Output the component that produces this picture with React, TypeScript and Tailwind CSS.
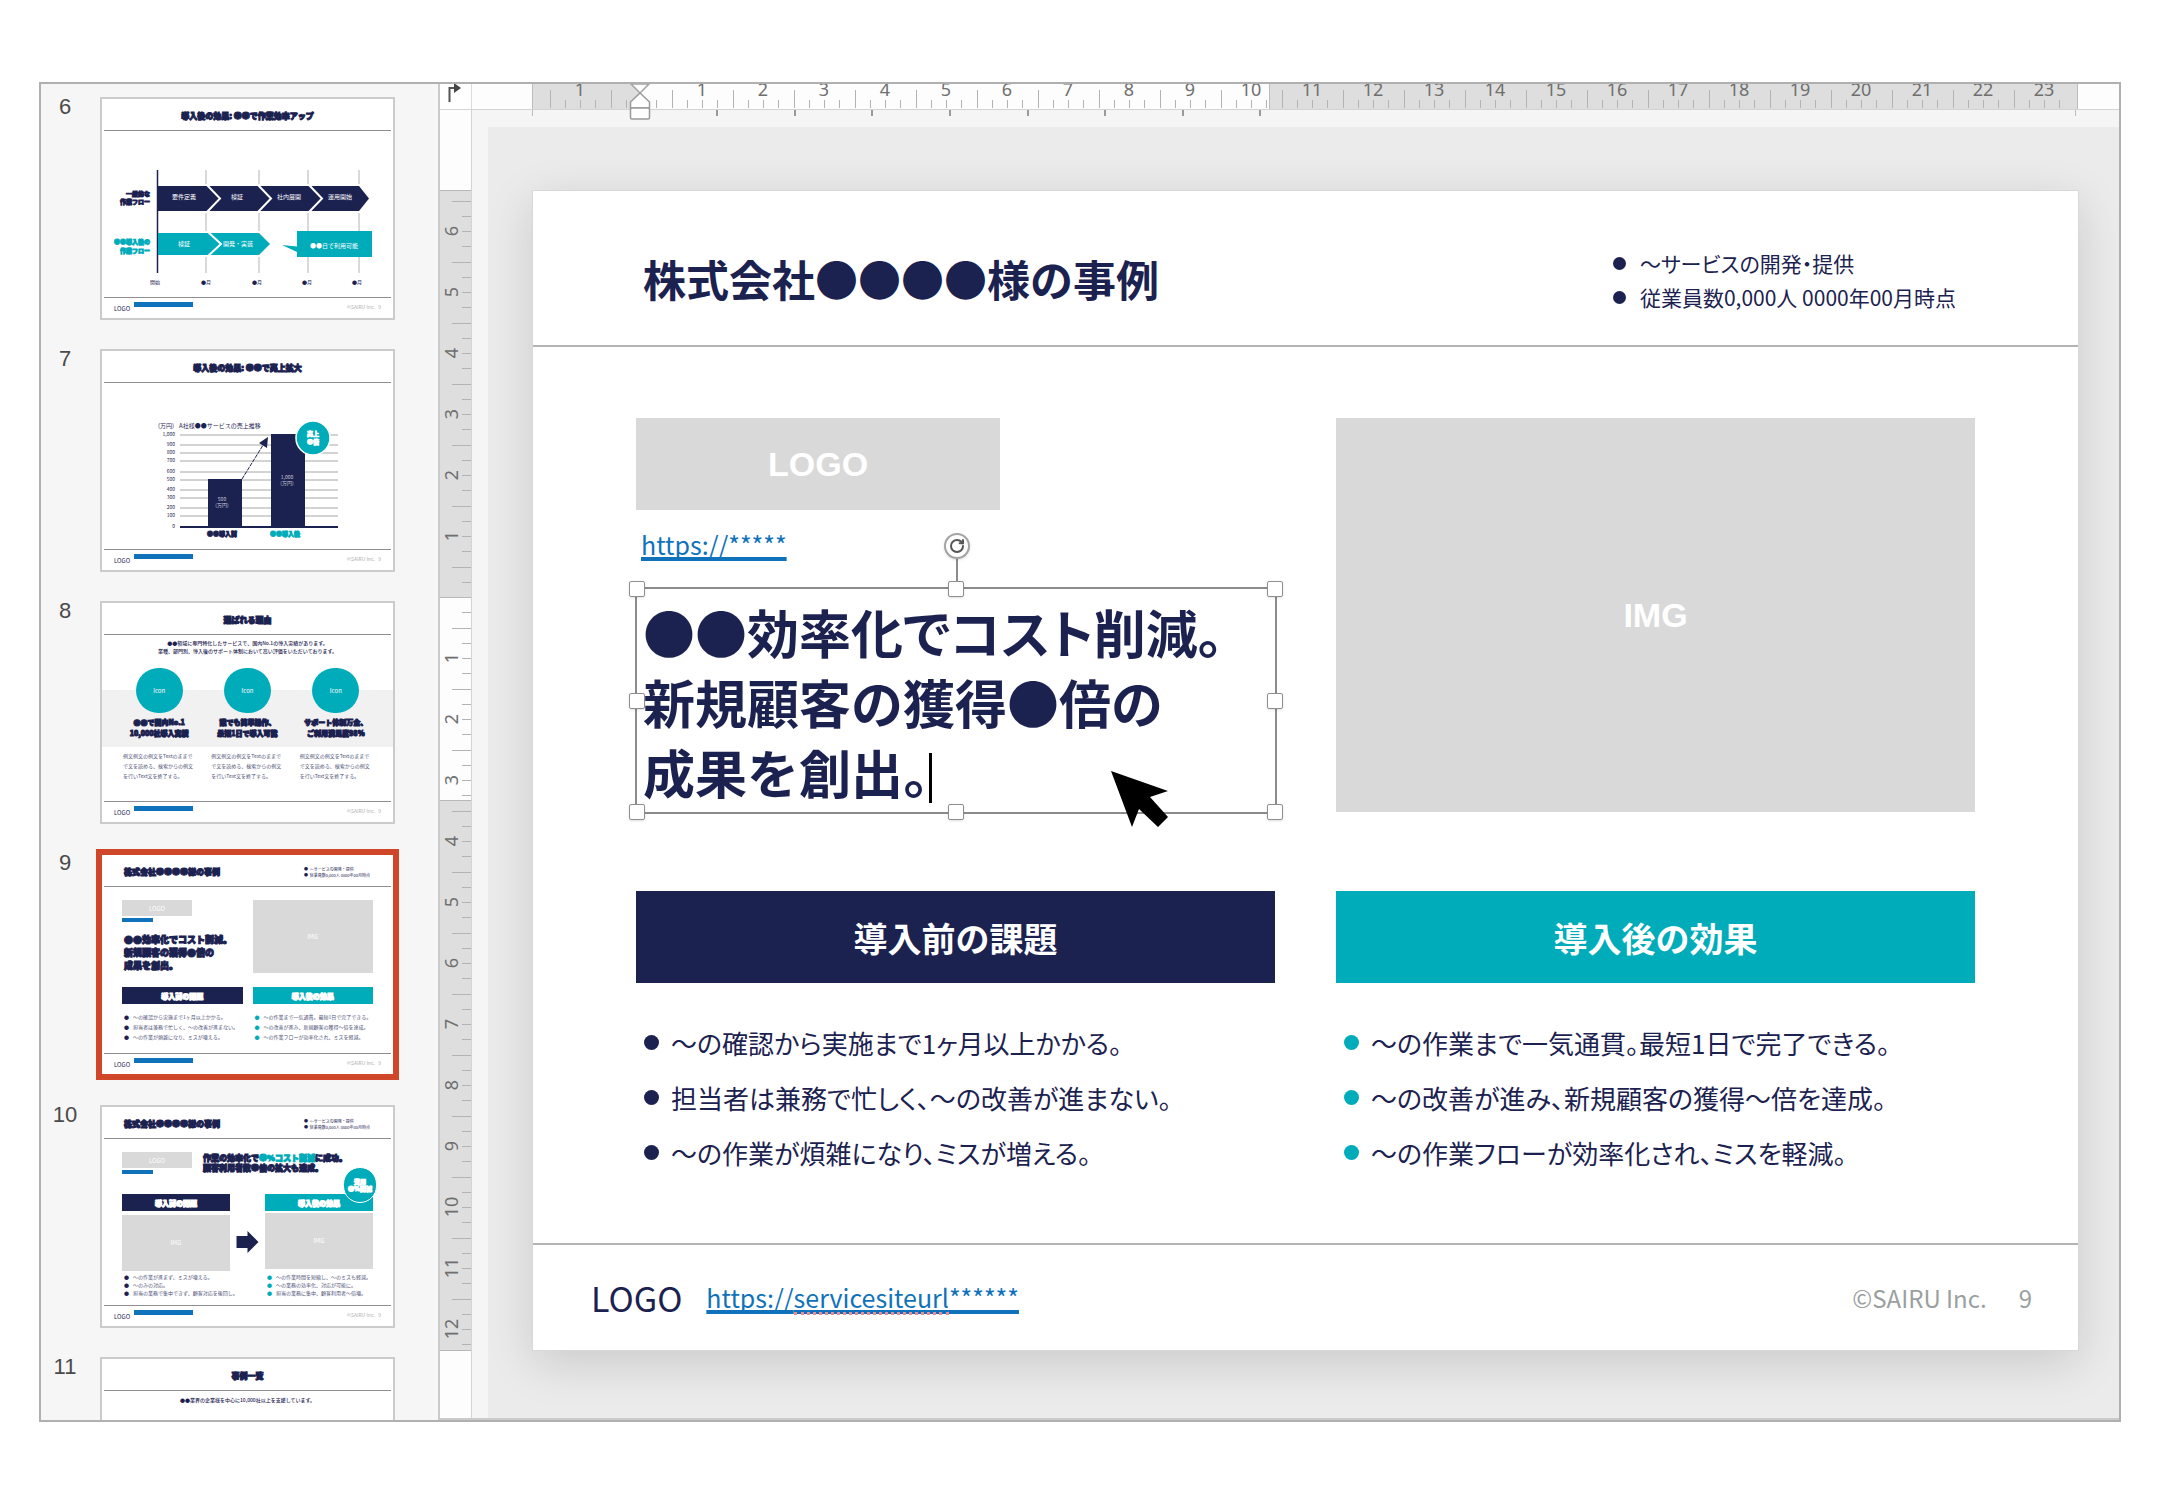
import type { ReactNode } from "react";
import { RotateCw } from "lucide-react";

const CM = 61;

/* ---------- slide thumbnails ---------- */

function ThumbFrame({ header, children }: { header: ReactNode; children?: ReactNode }) {
  return (
    <>
      <span className="mx-px flex h-[31px] items-center pt-0.5">{header}</span>
      <span className="mx-0.5 block h-px bg-[#8f8f8f]" />
      <span className="block h-[166px]">{children}</span>
      <span className="mx-0.5 block h-px bg-[#8f8f8f]" />
      <span className="flex h-5 items-start pt-1 pr-3 pl-3 text-[6px] leading-[10px]">
        <span className="w-5 pt-0.5">LOGO</span>
        <span className="h-[5px] w-[59px] bg-[#0f72ba]" />
        <span className="ml-auto text-[5px] text-[#b0b0b0]">©SAIRU Inc.&nbsp;&nbsp; 9</span>
      </span>
    </>
  );
}

function CenterTitle({ children }: { children: ReactNode }) {
  return (
    <span className="w-full text-center text-[8px] leading-[10px] font-black [-webkit-text-stroke:1px]">{children}</span>
  );
}

function CaseTitle() {
  return (
    <span className="flex w-full items-center justify-between pr-[22px] pl-[21px]">
      <span className="text-[8px] leading-[10px] font-black [-webkit-text-stroke:1px]">株式会社●●●●様の事例</span>
      <span className="text-[4px] leading-[6px]">
        <span className="block">●&nbsp; 〜サービスの開発・提供</span>
        <span className="block">●&nbsp; 従業員数0,000人 0000年00月時点</span>
      </span>
    </span>
  );
}

function FlowThumb() {
  return (
    <ThumbFrame header={<CenterTitle>導入後の効果: ●●で作業効率アップ</CenterTitle>}>
      <svg viewBox="2 34 291 166" className="block h-full w-full">
        <path d="M106 73V176M159 73V176M208 73V176M259 73V176" stroke="#b3b3b3" fill="none" />
        <path d="M58 87H260L272 102L260 116H58ZM58 134H160L173 147L160 160H58Z" fill="#fff" />
        <path d="M57.500 73V176" stroke="#1c2250" strokeWidth="1.500" />
        <path d="M58 89H259L269 101.500L259 114H58Z" fill="#1c2250" />
        <path d="M58 136H159L170 147L159 158H58Z" fill="#00acba" />
        <path d="M107 88L120 101.500L107 115M158 88L171 101.500L158 115M209 88L222 101.500L209 115M108 135L121 147L108 159" fill="none" stroke="#fff" strokeWidth="2" />
        <path d="M197 134H272V160H197V155L182 148L197 149.500Z" fill="#00acba" />
        <g fill="#fff" fontSize="6" textAnchor="middle">
          <text x="84" y="102">要件定義</text>
          <text x="137" y="102">検証</text>
          <text x="189" y="102">社内展開</text>
          <text x="240" y="102">運用開始</text>
          <text x="84" y="149">検証</text>
          <text x="138" y="149">開発・実装</text>
          <text x="234" y="151">●●日で利用可能</text>
        </g>
        <g fontSize="6" fontWeight="900" textAnchor="end" strokeWidth="0.800">
          <g fill="#1c2250" stroke="#1c2250">
            <text x="50" y="99">一般的な</text>
            <text x="50" y="107">作業フロー</text>
          </g>
          <g fill="#00acba" stroke="#00acba">
            <text x="50" y="147">●●導入後の</text>
            <text x="50" y="156">作業フロー</text>
          </g>
        </g>
        <g fill="#1c2250" fontSize="5" textAnchor="middle">
          <text x="55" y="187">開始</text>
          <text x="106" y="187">●月</text>
          <text x="157" y="187">●月</text>
          <text x="207" y="187">●月</text>
          <text x="257" y="187">●月</text>
        </g>
      </svg>
    </ThumbFrame>
  );
}

const gridYs = [86, 96, 104, 112, 123, 131, 141, 149, 159, 167, 178];

function ChartThumb() {
  return (
    <ThumbFrame header={<CenterTitle>導入後の効果: ●●で売上拡大</CenterTitle>}>
      <svg viewBox="2 34 291 166" className="block h-full w-full">
        {gridYs.map((y, i) => (
          <g key={y}>
            <path d={`M80 ${y}H238`} stroke="#a6a6a6" />
            <text x="75" y={y + 1} fontSize="5" textAnchor="end" fill="#1c2250">
              {i === 0 ? "1,000" : 1000 - i * 100}
            </text>
          </g>
        ))}
        <path d="M108 130H142V178H108ZM171 85H205V178H171Z" fill="#1c2250" />
        <path d="M80 178H238" stroke="#1c2250" strokeWidth="2" />
        <path d="M142 130L165 93" stroke="#1c2250" strokeDasharray="4 1" />
        <path d="M168 88L159 94L167 99Z" fill="#1c2250" />
        <circle cx="213" cy="89" r="17" fill="#00acba" stroke="#fff" strokeWidth="1.500" />
        <g fill="#1c2250" fontSize="5">
          <text x="58" y="79" fontSize="6">(万円)</text>
          <text x="79" y="79" fontSize="6">A社様●●サービスの売上推移</text>
        </g>
        <g fill="#c9cad8" textAnchor="middle" fontSize="5">
          <text x="122" y="152">500</text>
          <text x="122" y="158">(万円)</text>
          <text x="187" y="130">1,000</text>
          <text x="187" y="136">(万円)</text>
          <g fill="#fff" fontSize="6" fontWeight="900" stroke="#fff" strokeWidth="0.700">
            <text x="213" y="87">売上</text>
            <text x="213" y="95">●倍</text>
          </g>
        </g>
        <g fontSize="6" fontWeight="900" textAnchor="middle" strokeWidth="0.800">
          <text x="122" y="187" fill="#1c2250" stroke="#1c2250">●●導入前</text>
          <text x="185" y="187" fill="#00acba" stroke="#00acba">●●導入後</text>
        </g>
      </svg>
    </ThumbFrame>
  );
}

const reasons = [
  ["●●で国内No.1", "10,000社導入実績"],
  ["誰でも簡単操作、", "最短1日で導入可能"],
  ["サポート体制万全、", "ご利用満足度98%"],
];

function ReasonsThumb() {
  return (
    <ThumbFrame header={<CenterTitle>選ばれる理由</CenterTitle>}>
      <span className="block h-[33px] pt-1 text-center text-[5px] leading-2 font-medium">
        <span className="block">●●領域に専門特化したサービスで、国内No.1の導入実績があります。</span>
        <span className="block">業種、部門別、導入後のサポート体制において高い評価をいただいております。</span>
      </span>
      <span className="grid h-[79px] grid-cols-3 bg-linear-to-b from-white from-28% to-[#f1f1f1] to-28% px-[13px]">
        {reasons.map(([a, b]) => (
          <span key={a} className="flex flex-col items-center">
            <span className="flex h-[45px] w-[47px] shrink-0 items-center justify-center rounded-full bg-[#00acba] text-[6px] text-white">Icon</span>
            <span className="mt-1 text-center text-[7px] leading-[11px] font-black whitespace-nowrap [-webkit-text-stroke:1px]">
              {a}
              <br />
              {b}
            </span>
          </span>
        ))}
      </span>
      <span className="grid grid-cols-3 px-[13px] pt-1 text-[5px] leading-[10px] text-[#4d5276]">
        {reasons.map(([a]) => (
          <span key={a} className="pl-2 whitespace-nowrap">
            例文例文の例文をTextのままで
            <br />
            で文を読める、検索からの例文
            <br />
            を行いText文を終了する。
          </span>
        ))}
      </span>
    </ThumbFrame>
  );
}

function ThumbBullets({ items, accent }: { items: string[]; accent?: boolean }) {
  return (
    <span className="block pl-0.5 text-[5px] whitespace-nowrap text-[#4d5276]">
      {items.map((t) => (
        <span key={t} className="block">
          <span className={accent ? "mr-1 text-[#00acba]" : "mr-1 text-[#1c2250]"}>●</span>
          {t}
        </span>
      ))}
    </span>
  );
}

function ThumbBar({ accent, children }: { accent?: boolean; children: ReactNode }) {
  return (
    <span
      className={`flex h-[17px] items-center justify-center text-[7px] font-black text-white [-webkit-text-stroke:1px] ${accent ? "bg-[#00acba]" : "bg-[#1c2250]"}`}
    >
      {children}
    </span>
  );
}

function ThumbLogo() {
  return (
    <span className="block">
      <span className="flex h-4 w-[70px] items-center justify-center bg-[#d9d9d9] text-[6px] text-white">LOGO</span>
      <span className="mt-0.5 block h-1 w-[31px] bg-[#0f72ba]" />
    </span>
  );
}

const beforeItems = ["〜の確認から実施まで1ヶ月以上かかる。", "担当者は兼務で忙しく、〜の改善が進まない。", "〜の作業が煩雑になり、ミスが増える。"];
const afterItems = ["〜の作業まで一気通貫。最短1日で完了できる。", "〜の改善が進み、新規顧客の獲得〜倍を達成。", "〜の作業フローが効率化され、ミスを軽減。"];

function CaseThumb() {
  return (
    <ThumbFrame header={<CaseTitle />}>
      <span className="grid grid-cols-2 gap-x-2.5 px-5 pt-[13px]">
        <span className="block h-[74px]">
          <ThumbLogo />
          <span className="mt-[11px] block pl-0.5 text-[9px] leading-[13px] font-black whitespace-nowrap [-webkit-text-stroke:1px]">
            ●●効率化でコスト削減。
            <br />
            新規顧客の獲得●倍の
            <br />
            成果を創出。
          </span>
        </span>
        <span className="flex h-[73px] items-center justify-center bg-[#d9d9d9] text-[6px] text-white">IMG</span>
        <span className="mt-[13px] block leading-[10px]">
          <ThumbBar>導入前の課題</ThumbBar>
          <span className="block h-2" />
          <ThumbBullets items={beforeItems} />
        </span>
        <span className="mt-[13px] block leading-[10px]">
          <ThumbBar accent>導入後の効果</ThumbBar>
          <span className="block h-2" />
          <ThumbBullets items={afterItems} accent />
        </span>
      </span>
    </ThumbFrame>
  );
}

function CompareThumb() {
  return (
    <ThumbFrame header={<CaseTitle />}>
      <span className="relative block px-5 pt-[13px]">
        <span className="flex h-[42px] gap-[11px]">
          <ThumbLogo />
          <span className="pt-px text-[8px] leading-[10px] font-black whitespace-nowrap [-webkit-text-stroke:1px]">
            作業の効率化で<span className="text-[#00acba]">●%コスト削減</span>に成功。
            <br />
            顧客利用者数●倍の拡大も達成。
          </span>
        </span>
        <span className="grid grid-cols-[108px_1fr_108px] leading-2">
          <span className="block">
            <ThumbBar>導入前の課題</ThumbBar>
            <span className="mt-1 mb-0.5 flex h-14 items-center justify-center bg-[#d9d9d9] text-[6px] text-white">IMG</span>
            <ThumbBullets items={["〜の作業が進まず、ミスが増える。", "〜のみの対応。", "担当の業務で集中できず、顧客対応を後回し。"]} />
          </span>
          <svg viewBox="0 0 34 24" className="mt-9 h-6 w-full">
            <path d="M6 6H17V1L28 12L17 23V18H6Z" fill="#1c2250" />
          </svg>
          <span className="block">
            <ThumbBar accent>導入後の効果</ThumbBar>
            <span className="mt-0.5 mb-1 flex h-14 items-center justify-center bg-[#d9d9d9] text-[6px] text-white">IMG</span>
            <ThumbBullets accent items={["〜の作業時間を短縮し、〜のミスも軽減。", "〜の業務の効率化、対応が可能に。", "担当の業務に集中、顧客利用者〜倍増。"]} />
          </span>
        </span>
        <span className="absolute top-7 right-4 flex h-9 w-[34px] items-center justify-center rounded-full border border-white bg-[#00acba] text-center text-[6px] leading-[7px] font-black text-white [-webkit-text-stroke:1px]">
          費用
          <br />
          ●%削減
        </span>
      </span>
    </ThumbFrame>
  );
}

function ListThumb() {
  return (
    <ThumbFrame header={<CenterTitle>事例一覧</CenterTitle>}>
      <span className="block pt-1 text-center text-[5px] leading-[10px] font-medium">
        ●●業界の企業様を中心に10,000社以上を支援しています。
      </span>
    </ThumbFrame>
  );
}

const thumbs = [
  { n: 6, view: <FlowThumb /> },
  { n: 7, view: <ChartThumb /> },
  { n: 8, view: <ReasonsThumb /> },
  { n: 9, view: <CaseThumb /> },
  { n: 10, view: <CompareThumb /> },
  { n: 11, view: <ListThumb /> },
];

function Sidebar() {
  return (
    <nav aria-label="スライド一覧" className="relative w-[399px] shrink-0 overflow-hidden border-r-2 border-[#cbcbcb] bg-[#f6f6f6]">
      <ol className="absolute inset-x-0 top-0 flex flex-col gap-[29px] pt-[13px]">
        {thumbs.map(({ n, view }) => (
          <li key={n} className="flex">
            <span className="w-12 shrink-0 text-center font-[Liberation_Sans,sans-serif] text-[22px] leading-5 text-[#4a4a4a]">{n}</span>
            <button
              type="button"
              aria-label={`スライド ${n}`}
              aria-current={n === 9}
              className={`ml-[11px] block w-[295px] border-2 bg-white text-left text-[#1c2250] ${n === 9 ? "border-[#cf4628] ring-4 ring-[#cf4628]" : "border-[#cbcbcb]"}`}
            >
              {view}
            </button>
          </li>
        ))}
      </ol>
    </nav>
  );
}

/* ---------- rulers ---------- */

const range = (from: number, to: number) => {
  const out: number[] = [];
  for (let q = from; q <= to; q++) out.push(q);
  return out;
};

function TopRuler() {
  const zero = 169;
  return (
    <svg className="block h-[25px] w-full bg-[#fdfdfd]" aria-hidden="true">
      <rect x="60" width="108" height="25" fill="#dedede" />
      <rect x="797" width="809" height="25" fill="#dedede" />
      <path d="M60.500 0V25M797.500 0V25M1605.500 0V25" stroke="#bdbdbd" />
      {range(-6, 93).map((q) => {
        const x = zero + Math.round((q * CM) / 4);
        const tall = Math.abs(q % 4) === 2;
        return q === 0 ? null : <path key={q} d={`M${x + 0.5} ${tall ? 6 : 16}V24`} stroke="#b3b3b3" />;
      })}
      {range(-1, 23).map((n) =>
        n === 0 ? null : (
          <text key={n} x={zero + n * CM} y="12" textAnchor="middle" fontSize="18" fill="#6f6f6f" fontFamily="Noto Sans, sans-serif">
            {Math.abs(n)}
          </text>
        ),
      )}
    </svg>
  );
}

function IndentMarker() {
  return (
    <svg viewBox="0 0 24 38" className="absolute top-0 left-[156px] h-[38px] w-6" aria-hidden="true">
      <path d="M3 0L12 9L21 0Z" fill="#fff" stroke="#a3a3a3" strokeWidth="1.500" />
      <path d="M12 9L21.500 18V24H2.500V18Z" fill="#fff" stroke="#9a9a9a" strokeWidth="1.500" />
      <rect x="2.500" y="24" width="19" height="11" rx="1.500" fill="#fff" stroke="#9a9a9a" strokeWidth="1.500" />
    </svg>
  );
}

function SideRuler() {
  const zero = 487;
  return (
    <svg className="block h-full w-full bg-[#fdfdfd]" aria-hidden="true">
      <rect y="80" width="31" height="407" fill="#dedede" />
      <rect y="690" width="31" height="550" fill="#dedede" />
      <path d="M0 80.500H31M0 487.500H31M0 690.500H31M0 1240.500H31" stroke="#b8b8b8" />
      {range(-26, 49).map((q) => {
        const y = zero + Math.round((q * CM) / 4);
        const tall = Math.abs(q % 4) === 2;
        return q === 0 ? null : <path key={q} d={`M${tall ? 12 : 22} ${y + 0.5}H31`} stroke="#b3b3b3" />;
      })}
      {range(-6, 12).map((n) =>
        n === 0 ? null : (
          <text key={n} transform={`translate(18 ${zero + n * CM}) rotate(-90)`} textAnchor="middle" fontSize="18" fill="#6f6f6f" fontFamily="Noto Sans, sans-serif">
            {Math.abs(n)}
          </text>
        ),
      )}
    </svg>
  );
}

function TabStops() {
  return (
    <svg className="block h-[17px] w-full" aria-hidden="true">
      {[245, 323, 400, 478, 556, 633, 711, 788].map((x) => (
        <path key={x} d={`M${x} 0V6`} stroke="#9a9a9a" strokeWidth="2" />
      ))}
      <path d="M60.500 0V6M1603.500 0V6" stroke="#bdbdbd" />
      <path d="M0 80.500H6" stroke="#bdbdbd" />
    </svg>
  );
}

/* ---------- slide ---------- */

const handlePositions = [
  "-top-2 -left-2",
  "-top-2 left-1/2 -ml-2",
  "-top-2 -right-2",
  "top-1/2 -left-2 -mt-2",
  "top-1/2 -right-2 -mt-2",
  "-bottom-2 -left-2",
  "-bottom-2 left-1/2 -ml-2",
  "-bottom-2 -right-2",
];

function SelectedTextBox() {
  return (
    <div className="relative -mr-0.5 -ml-px mt-auto h-[227px] border-2 border-[#8c8c8c] pt-2 pl-1.5">
      {handlePositions.map((p) => (
        <span key={p} className={`absolute size-4 rounded-[2px] border border-[#8f8f8f] bg-white shadow-sm ${p}`} />
      ))}
      <span className="absolute -top-[30px] left-1/2 h-[22px] w-0.5 bg-[#8c8c8c]" />
      <button
        type="button"
        aria-label="回転"
        className="absolute -top-14 left-1/2 -ml-3 flex size-[26px] items-center justify-center rounded-full border-2 border-[#a3a3a3] bg-white shadow-sm"
      >
        <RotateCw className="size-4 text-[#555]" strokeWidth={3} />
      </button>
      <h2 className="relative text-[52px] leading-[70px] font-bold whitespace-nowrap">
        ●●効率化<span className="[font-feature-settings:'palt']">でコスト</span>削減。
        <br />
        新規顧客の獲得●倍の
        <br />
        成果を創出
        <span className="[font-feature-settings:'palt']">。</span>
        <span className="inline-block h-[50px] w-[3px] bg-black align-[-9px]" />
      </h2>
      <svg viewBox="0 0 57 57" className="absolute right-[107px] -bottom-4 size-[57px]" aria-hidden="true">
        <path d="M0 0L57 20L39 26L57 46L47 56L28 38L21 56Z" fill="#000" />
      </svg>
    </div>
  );
}

function Bullets({ items, accent }: { items: string[]; accent?: boolean }) {
  return (
    <ul className="mt-8 pl-2 text-[26px] leading-[55px] whitespace-nowrap">
      {items.map((t) => (
        <li key={t} className="flex items-center gap-3 [font-feature-settings:'palt']">
          <span className={`size-[15px] shrink-0 rounded-full ${accent ? "bg-[#00acba]" : "bg-[#1c2250]"}`} />
          {t}
        </li>
      ))}
    </ul>
  );
}

function Slide() {
  return (
    <article className="border border-[#d8d8d8] bg-white text-[#1c2250] shadow-[0_12px_44px_rgba(0,0,0,0.14)]">
      <header className="flex h-[156px] items-center justify-between border-b-2 border-[#b4b4b4] pr-[122px] pl-[110px]">
        <h1 className="mt-5 text-[43px] leading-[60px] font-bold whitespace-nowrap">株式会社●●●●様の事例</h1>
        <ul className="mt-6 text-[21px] leading-[34px] whitespace-nowrap">
          {["〜サービスの開発・提供", "従業員数0,000人 0000年00月時点"].map((t) => (
            <li key={t} className="flex items-center gap-3.5 [font-feature-settings:'palt']">
              <span className="size-[13px] rounded-full bg-[#1c2250]" />
              {t}
            </li>
          ))}
        </ul>
      </header>

      <div className="grid grid-cols-2 gap-x-[61px] px-[103px] pt-[71px] pb-[63px]">
        <div className="flex h-[396px] flex-col">
          <div className="flex h-[92px] w-[57%] items-center justify-center bg-[#d9d9d9] font-[Liberation_Sans,sans-serif] text-[34px] font-bold text-white">LOGO</div>
          <a href="#case" className="mt-[18px] ml-[5px] self-start text-[25px] leading-8 text-[#0f72ba] underline decoration-4 underline-offset-2 [text-decoration-skip-ink:none]">
            https://*****
          </a>
          <SelectedTextBox />
        </div>
        <div className="flex h-[394px] items-center justify-center bg-[#d9d9d9] font-[Liberation_Sans,sans-serif] text-[34px] font-bold text-white">IMG</div>
        <section className="mt-[77px]">
          <h3 className="flex h-[92px] items-center justify-center bg-[#1c2250] text-[34px] font-bold text-white">導入前の課題</h3>
          <Bullets items={beforeItems} />
        </section>
        <section className="mt-[77px]">
          <h3 className="flex h-[92px] items-center justify-center bg-[#00acba] text-[34px] font-bold text-white">導入後の効果</h3>
          <Bullets items={afterItems} accent />
        </section>
      </div>

      <footer className="flex h-[107px] items-center border-t-2 border-[#b4b4b4] pr-[46px] pl-[58px] text-[25px]">
        <span className="text-[34px]">LOGO</span>
        <a href="#service" className="ml-6 text-[#0f72ba] underline decoration-4 underline-offset-2 [text-decoration-skip-ink:none]">
          https://<span className="relative">servicesiteurl<span className="absolute inset-x-0 bottom-0 border-b-3 border-dotted border-[#f08a94]" /></span>******
        </a>
        <span className="ml-auto text-2xl text-[#9a9f9f]">©SAIRU Inc.</span>
        <span className="ml-8 text-2xl text-[#9a9f9f]">9</span>
      </footer>
    </article>
  );
}

export default function App() {
  return (
    <div className="min-h-screen bg-white pt-[82px] pr-[39px] pb-[72px] pl-[39px] font-['Noto_Sans_CJK_JP',sans-serif]" lang="ja">
      <div className="flex border-2 border-[#b0b0b0] bg-[#f5f5f5]">
        <Sidebar />
        <main className="flex min-w-0 flex-1 flex-col border-b-2 border-[#cbcbcb]">
          <div className="relative flex border-b border-[#d4d4d4]">
            <div className="w-8 shrink-0 border-r border-[#dcdcdc] bg-white">
              <svg viewBox="0 0 31 25" className="block h-[25px] w-[31px]" aria-hidden="true">
                <path d="M9.500 18V4H15" fill="none" stroke="#555" strokeWidth="2" />
                <path d="M14 -1L21 4L14 9Z" fill="#444" />
              </svg>
            </div>
            <div className="relative min-w-0 flex-1">
              <TopRuler />
              <div className="absolute inset-x-0 top-0 z-10">
                <IndentMarker />
              </div>
            </div>
          </div>
          <div className="flex flex-1">
            <div className="relative w-8 shrink-0 border-r border-[#d4d4d4]">
              <div className="absolute inset-0">
                <SideRuler />
              </div>
            </div>
            <div className="min-w-0 flex-1 pl-4">
              <div className="-ml-4">
                <TabStops />
              </div>
              <div className="overflow-hidden bg-[#ebebeb] pt-[63px] pr-10 pb-[67px] pl-11">
                <Slide />
              </div>
            </div>
          </div>
        </main>
      </div>
    </div>
  );
}
